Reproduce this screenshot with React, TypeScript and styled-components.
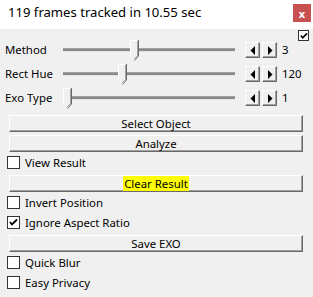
import styled, { createGlobalStyle } from 'styled-components';

const GlobalStyle = createGlobalStyle`
  html, body {
    margin: 0;
    padding: 0;
    background: #f0f0f0;
  }
  body {
    font-family: 'Noto Sans', 'Open Sans', sans-serif;
    font-size: 11.4px;
    color: #000;
  }
`;

const Window = styled.div`
  width: 313px;
  height: 297px;
  background: #f0f0f0;
  overflow: hidden;
`;

const TitleBar = styled.div`
  height: 29px;
  background: #fff;
  display: flex;
  align-items: flex-start;
  justify-content: space-between;
  padding-left: 8px;
  box-sizing: border-box;
`;

const Title = styled.div`
  margin-top: 4px;
  font-size: 13.1px;
  line-height: 17px;
`;

const CloseButton = styled.div`
  width: 18px;
  height: 18px;
  margin: 4px 2px 0 0;
  background: #c75050;
  color: #fff;
  font-weight: bold;
  font-size: 11px;
  display: flex;
  align-items: center;
  justify-content: center;
  line-height: 1;
`;

const Body = styled.div`
  display: flex;
  flex-direction: column;
  padding: 0 8px 0 5px;
`;

const TopRow = styled.div`
  height: 12px;
  display: flex;
  justify-content: flex-end;
  padding-top: 1px;
  margin-right: -4px;
`;

const SmallCheck = styled.div`
  width: 9px;
  height: 9px;
  background: #fff;
  border: 1px solid #333;
  display: flex;
  align-items: center;
  justify-content: center;
`;

const SliderRows = styled.div`
  display: flex;
  flex-direction: column;
  gap: 8px;
`;

const SliderRow = styled.div`
  height: 16px;
  display: grid;
  grid-template-columns: 58px 172px 10px 32px 1fr;
  align-items: center;
`;

const Label = styled.div`
  line-height: 16px;
  white-space: nowrap;
`;

const Track = styled.div`
  position: relative;
  height: 2px;
  background: #8a8a8a;
  border-top: 1px solid #a0a0a0;
  border-bottom: 1px solid #e3e3e3;
`;

const Thumb = styled.svg`
  position: absolute;
  top: -9px;
  width: 9px;
  height: 21px;
`;

const Spinner = styled.div`
  grid-column: 4;
  display: flex;
  gap: 2px;
`;

const SpinButton = styled.div`
  width: 13px;
  height: 14px;
  background: #f0f0f0;
  border: 1px solid;
  border-color: #fff #696969 #696969 #fff;
  box-shadow: inset -1px -1px 0 #a0a0a0;
  display: flex;
  align-items: center;
  justify-content: center;
`;

const Value = styled.div`
  padding-left: 5px;
  line-height: 16px;
`;

const Button = styled.div<{ $top?: number }>`
  margin: ${({ $top }) => $top ?? 3}px 2px 0 4px;
  height: 15px;
  background: #f0f0f0;
  border: 1px solid;
  border-color: #fff #696969 #696969 #fff;
  box-shadow: inset -1px -1px 0 #a0a0a0;
  display: flex;
  align-items: center;
  justify-content: center;
  line-height: 15px;
`;

const Highlight = styled.span`
  background: #ffff00;
  padding: 0 1px;
`;

const CheckRow = styled.div`
  height: 20px;
  display: flex;
  align-items: center;
  gap: 5px;
  padding-left: 2px;
`;

const CheckBox = styled.div`
  width: 11px;
  height: 11px;
  background: #fff;
  border: 1px solid #333;
  display: flex;
  align-items: center;
  justify-content: center;
`;

const Tick = () => (
  <svg width="9" height="9" viewBox="0 0 9 9">
    <path d="M1 4 L3 6.5 L8 1.5" fill="none" stroke="#000" strokeWidth="1.8" />
  </svg>
);

const Arrow = ({ dir }: { dir: 'left' | 'right' }) => (
  <svg width="6" height="9" viewBox="0 0 6 9">
    {dir === 'left' ? <path d="M5 0 L5 9 L0.5 4.5 Z" fill="#000" /> : <path d="M1 0 L1 9 L5.5 4.5 Z" fill="#000" />}
  </svg>
);

const ThumbShape = ({ left }: { left: number }) => (
  <Thumb viewBox="0 0 9 21" style={{ left }}>
    <path d="M0.5 0.5 H8.5 V16 L4.5 20.5 L0.5 16 Z" fill="#f0f0f0" />
    <path d="M0.5 16 V0.5 H8" fill="none" stroke="#fff" />
    <path d="M8.5 0 V16 L4.5 20.5" fill="none" stroke="#696969" />
    <path d="M7.5 1 V15.5 L4.2 19" fill="none" stroke="#a0a0a0" />
  </Thumb>
);

const sliders = [
  { label: 'Method', value: '3', left: 67 },
  { label: 'Rect Hue', value: '120', left: 55 },
  { label: 'Exo Type', value: '1', left: 0 },
];

const Check = ({ label, checked }: { label: string; checked?: boolean }) => (
  <CheckRow>
    <CheckBox>{checked && <Tick />}</CheckBox>
    <span>{label}</span>
  </CheckRow>
);

const App = () => {
  return (
    <Window>
      <GlobalStyle />
      <TitleBar>
        <Title>119 frames tracked in 10.55 sec</Title>
        <CloseButton>x</CloseButton>
      </TitleBar>
      <Body>
        <TopRow>
          <SmallCheck>
            <svg width="8" height="8" viewBox="0 0 9 9">
              <path d="M1 4 L3 6.5 L8 1.5" fill="none" stroke="#000" strokeWidth="1.8" />
            </svg>
          </SmallCheck>
        </TopRow>
        <SliderRows>
          {sliders.map((s) => (
            <SliderRow key={s.label}>
              <Label>{s.label}</Label>
              <Track>
                <ThumbShape left={s.left} />
              </Track>
              <Spinner>
                <SpinButton><Arrow dir="left" /></SpinButton>
                <SpinButton><Arrow dir="right" /></SpinButton>
              </Spinner>
              <Value>{s.value}</Value>
            </SliderRow>
          ))}
        </SliderRows>
        <Button $top={9}>Select Object</Button>
        <Button>Analyze</Button>
        <Check label="View Result" />
        <Button>
          <Highlight>Clear Result</Highlight>
        </Button>
        <Check label="Invert Position" />
        <Check label="Ignore Aspect Ratio" checked />
        <Button>Save EXO</Button>
        <Check label="Quick Blur" />
        <Check label="Easy Privacy" />
      </Body>
    </Window>
  );
};

export default App;
